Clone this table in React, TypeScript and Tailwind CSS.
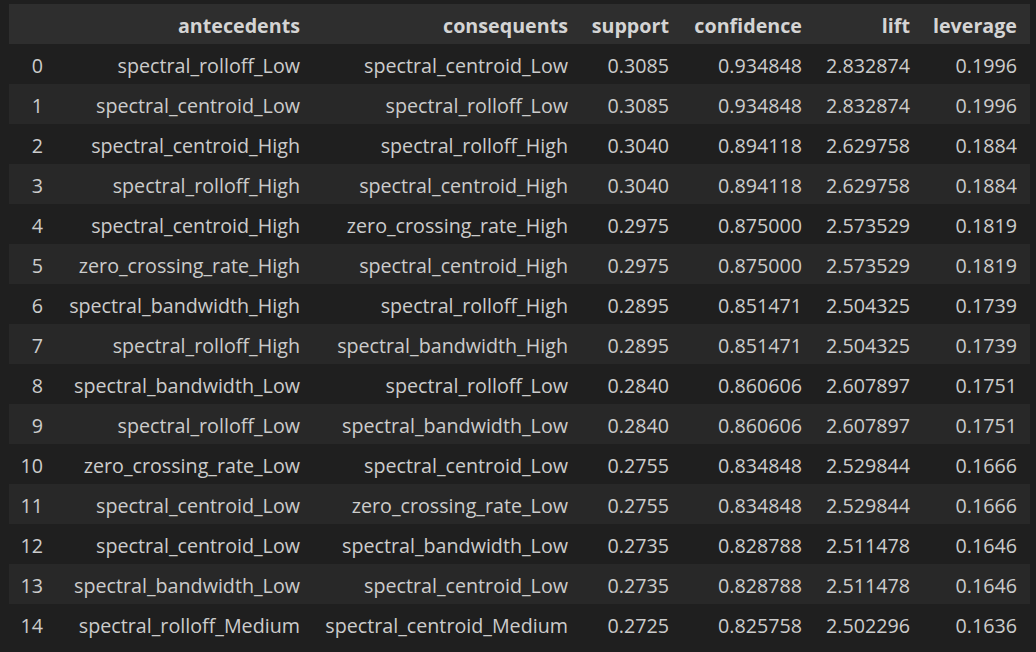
import React from "react";

type Row = [string, string, string, string, string, string];

const rows: Row[] = [
  ["spectral_rolloff_Low", "spectral_centroid_Low", "0.3085", "0.934848", "2.832874", "0.1996"],
  ["spectral_centroid_Low", "spectral_rolloff_Low", "0.3085", "0.934848", "2.832874", "0.1996"],
  ["spectral_centroid_High", "spectral_rolloff_High", "0.3040", "0.894118", "2.629758", "0.1884"],
  ["spectral_rolloff_High", "spectral_centroid_High", "0.3040", "0.894118", "2.629758", "0.1884"],
  ["spectral_centroid_High", "zero_crossing_rate_High", "0.2975", "0.875000", "2.573529", "0.1819"],
  ["zero_crossing_rate_High", "spectral_centroid_High", "0.2975", "0.875000", "2.573529", "0.1819"],
  ["spectral_bandwidth_High", "spectral_rolloff_High", "0.2895", "0.851471", "2.504325", "0.1739"],
  ["spectral_rolloff_High", "spectral_bandwidth_High", "0.2895", "0.851471", "2.504325", "0.1739"],
  ["spectral_bandwidth_Low", "spectral_rolloff_Low", "0.2840", "0.860606", "2.607897", "0.1751"],
  ["spectral_rolloff_Low", "spectral_bandwidth_Low", "0.2840", "0.860606", "2.607897", "0.1751"],
  ["zero_crossing_rate_Low", "spectral_centroid_Low", "0.2755", "0.834848", "2.529844", "0.1666"],
  ["spectral_centroid_Low", "zero_crossing_rate_Low", "0.2755", "0.834848", "2.529844", "0.1666"],
  ["spectral_centroid_Low", "spectral_bandwidth_Low", "0.2735", "0.828788", "2.511478", "0.1646"],
  ["spectral_bandwidth_Low", "spectral_centroid_Low", "0.2735", "0.828788", "2.511478", "0.1646"],
  ["spectral_rolloff_Medium", "spectral_centroid_Medium", "0.2725", "0.825758", "2.502296", "0.1636"],
];

const headers = ["antecedents", "consequents", "support", "confidence", "lift", "leverage"];

export default function App() {
  return (
    <div
      className="w-[1036px] h-[652px] bg-[#1f1f1f] pt-[4px] pl-[9px] overflow-hidden text-[#cccccc]"
      style={{ fontFamily: '"Open Sans", "Noto Sans", sans-serif' }}
    >
      <table className="table-fixed w-[1021px] border-collapse text-[19.7px] leading-none">
        <colgroup>
          <col className="w-[47px]" />
          <col className="w-[257px]" />
          <col className="w-[268px]" />
          <col className="w-[101px]" />
          <col className="w-[133px]" />
          <col className="w-[108px]" />
          <col className="w-[107px]" />
        </colgroup>
        <thead>
          <tr className="h-[40px] bg-[#2e2e2e]">
            <th />
            {headers.map((h) => (
              <th key={h} className="text-right pr-[13px] pt-[4px] font-bold text-[#d4d4d4] whitespace-nowrap">
                {h}
              </th>
            ))}
          </tr>
        </thead>
        <tbody>
          {rows.map((r, i) => (
            <tr key={i} className={`h-[40px] ${i % 2 === 1 ? "bg-[#282828]" : "bg-[#1f1f1f]"}`}>
              <td className="text-right pr-[13px] pt-[4px]">{i}</td>
              {r.map((c, j) => (
                <td key={j} className="text-right pr-[13px] pt-[4px] whitespace-nowrap">
                  {c}
                </td>
              ))}
            </tr>
          ))}
        </tbody>
      </table>
    </div>
  );
}
